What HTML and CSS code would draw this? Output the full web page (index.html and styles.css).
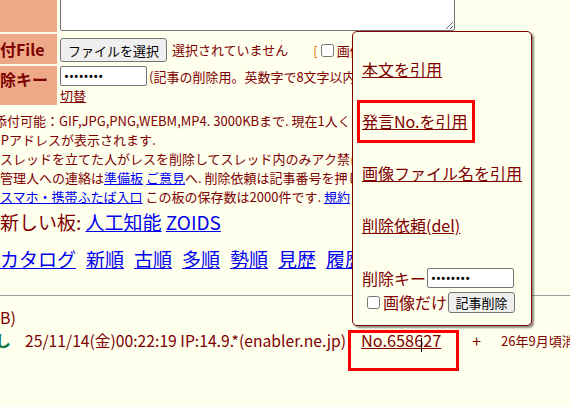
FILE: index.html
```html
<!DOCTYPE html>
<html lang="ja">
<head>
<meta charset="utf-8">
<title>ふたば</title>
<link rel="stylesheet" href="styles.css">
</head>
<body>
<div class="form">
  <div class="lab"></div>
  <div class="cell c1"><textarea class="body-ta"></textarea></div>
  <div class="lab l2">添付File</div>
  <div class="cell c2">
    <button class="filebtn" type="button">ファイルを選択</button>
    <span class="nofile">選択されていません</span>
    <span class="opt"><span class="br">[</span><input type="checkbox" class="cb"><span>画像なし</span>]</span>
  </div>
  <div class="lab l3">削除キー</div>
  <div class="cell c3">
    <div class="pwline"><input type="password" class="pw" value="12345678"><span class="pwnote">(記事の削除用。英数字で8文字以内)</span></div>
    <a class="mlink" href="#">切替</a>
  </div>
</div>

<ul class="notes">
  <li class="n1">添付可能：GIF,JPG,PNG,WEBM,MP4. 3000KBまで. 現在1人くらいが見てます.</li>
  <li class="n2">IPアドレスが表示されます.</li>
  <li>スレッドを立てた人がレスを削除してスレッド内のみアク禁にできます.</li>
  <li>管理人への連絡は<a href="#">準備板</a> <a href="#">ご意見</a>へ. 削除依頼は記事番号を押してください.</li>
  <li><a href="#">スマホ・携帯ふたば入口</a> この板の保存数は2000件です. <a href="#">規約</a></li>
</ul>

<div class="boards">新しい板: <a href="#">人工知能</a> <a href="#">ZOIDS</a></div>

<nav class="modes">
  <a href="#">カタログ</a><a href="#">新順</a><a href="#">古順</a><a href="#">多順</a><a href="#">勢順</a><a href="#">見歴</a><a href="#">履歴</a>
</nav>

<div class="rule"></div>

<div class="finfo"><span>画像ファイル名：1763047339123.jpg-(246810 B)</span></div>
<div class="resline">
  <span class="namebox"><b class="name">名無し</b></span>
  <span class="date">25/11/14(金)00:22:19 IP:14.9.*(enabler.ne.jp)</span>
  <a class="no" href="#">No.658627</a>
  <span class="plus">+</span>
  <span class="exp">26年9月頃消えます</span>
</div>

<div class="popup">
  <a href="#">本文を引用</a>
  <a href="#">発言No.を引用</a>
  <a href="#">画像ファイル名を引用</a>
  <a href="#" class="last">削除依頼(del)</a>
  <div class="delrow"><span>削除キー</span><input type="password" class="pw" value="12345678"></div>
  <div class="delrow2"><input type="checkbox" class="cb2"><span>画像だけ</span><button class="delbtn" type="button">記事削除</button></div>
</div>

<div class="mark mark1"></div>
<div class="mark mark2"></div>
<div class="ibeam"></div>
</body>
</html>
```
FILE: styles.css
```css
html, body {
  margin: 0;
  padding: 0;
}
body {
  width: 570px;
  height: 407px;
  overflow: hidden;
  position: relative;
  background: #ffffee;
  color: #800000;
  font-family: "Noto Sans CJK JP", "Noto Sans", sans-serif;
  font-size: 13px;
}
a { color: #0000ee; }

/* form */
.form {
  display: grid;
  grid-template-columns: 75px 1fr;
  grid-template-rows: 72px 30px 39px;
  column-gap: 3px;
  row-gap: 2px;
  margin-left: -18px;
  margin-top: -40px;
}
.lab {
  background: #eeaa88;
  font-weight: bold;
  font-size: 16px;
  padding-left: 2px;
  white-space: nowrap;
}
.l2 { display: flex; align-items: center; }
.l3 { padding-top: 1px; line-height: 24px; }
.cell { white-space: nowrap; }
.c1 { display: flex; align-items: flex-end; padding-bottom: 1px; }
.body-ta {
  display: block;
  width: 395px;
  height: 70px;
  box-sizing: border-box;
  border: 1px solid #767676;
  border-radius: 2px;
  background: #fff;
  margin: 0;
}
.c2 { display: flex; align-items: center; padding-top: 2px; }
.filebtn {
  height: 24px;
  width: 107px;
  box-sizing: border-box;
  margin: 0;
  padding: 0;
  font-family: "Noto Sans CJK JP", sans-serif;
  font-size: 13px;
  color: #000;
  background: #efefef;
  border: 1px solid #767676;
  border-radius: 3px;
}
.nofile { margin-left: 5px; line-height: 20px; }
.opt { margin-left: 25px; display: flex; align-items: center; }
.br { color: #e07020; margin-right: 3px; }
.cb { margin: 0 3px 0 0; width: 13px; height: 13px; }
.c3 { display: flex; flex-direction: column; }
.pwline { display: flex; align-items: center; height: 20px; }
.pw {
  width: 87px;
  height: 20px;
  box-sizing: border-box;
  margin: 0;
  padding: 1px 3px;
  border: 1px solid #767676;
  border-radius: 2px;
  background: #fff;
  font-size: 13px;
  font-family: "Noto Sans", sans-serif;
}
.pwnote { margin-left: 2px; }
.mlink {
  color: #800000;
  line-height: 19px;
  width: max-content;
}

/* notes */
.notes {
  list-style: none;
  margin: 6px 0 0;
  padding: 0;
  font-size: 13px;
  line-height: 19px;
  white-space: nowrap;
}
.n1 { margin-left: -6px; }
.n2 { margin-left: -3px; }

.boards {
  margin-top: 2px;
  font-size: 19px;
  line-height: 28px;
  white-space: nowrap;
}
.modes {
  display: flex;
  gap: 10px;
  margin-top: 9px;
  font-size: 19px;
  line-height: 28px;
  white-space: nowrap;
}
.rule {
  margin-top: 22px;
  border-top: 1px solid #a0a0a0;
}

.finfo {
  margin-top: 11px;
  width: 16px;
  display: flex;
  justify-content: flex-end;
  white-space: nowrap;
  font-size: 16px;
  line-height: 20px;
}
.resline {
  display: flex;
  align-items: center;
  margin-top: 3px;
  height: 20px;
  white-space: nowrap;
  font-size: 15.7px;
}
.namebox {
  width: 11px;
  flex: none;
  display: flex;
  justify-content: flex-end;
}
.name { color: #117743; }
.date { margin-left: 14px; }
.no { color: #800000; margin-left: 15px; font-size: 16.3px; }
.plus { margin-left: 31px; }
.exp { margin-left: 20px; font-size: 13px; }

/* popup */
.popup {
  position: absolute;
  left: 352px;
  top: 31px;
  width: 180px;
  height: 295px;
  box-sizing: border-box;
  border: 1px solid #800000;
  border-radius: 5px;
  background: #ffffee;
  box-shadow: 2px 2px 2px rgba(0, 0, 0, 0.45);
  padding: 25px 0 0 9px;
  font-size: 16px;
}
.popup a {
  display: block;
  width: max-content;
  line-height: 24px;
  margin-bottom: 28px;
  color: #800000;
}
.popup a.last { margin-bottom: 31px; }
.delrow { display: flex; align-items: center; height: 20px; white-space: nowrap; }
.delrow .pw { margin-left: 1px; }
.delrow2 { display: flex; align-items: center; margin-top: 2px; white-space: nowrap; }
.cb2 { margin: 0 3px 0 5px; width: 13px; height: 13px; }
.delbtn {
  margin-left: 1px;
  width: 67px;
  height: 21px;
  box-sizing: border-box;
  padding: 0;
  font-family: "Noto Sans CJK JP", sans-serif;
  font-size: 13px;
  color: #000;
  background: #efefef;
  border: 1px solid #767676;
  border-radius: 3px;
}

.mark {
  position: absolute;
  border: 3px solid #ff0000;
  box-sizing: border-box;
}
.mark1 { left: 357px; top: 100px; width: 118px; height: 43px; }
.mark2 { left: 348px; top: 330px; width: 111px; height: 41px; }
.ibeam {
  position: absolute;
  left: 421px;
  top: 338px;
  width: 1px;
  height: 14px;
  background: #000;
}
```
